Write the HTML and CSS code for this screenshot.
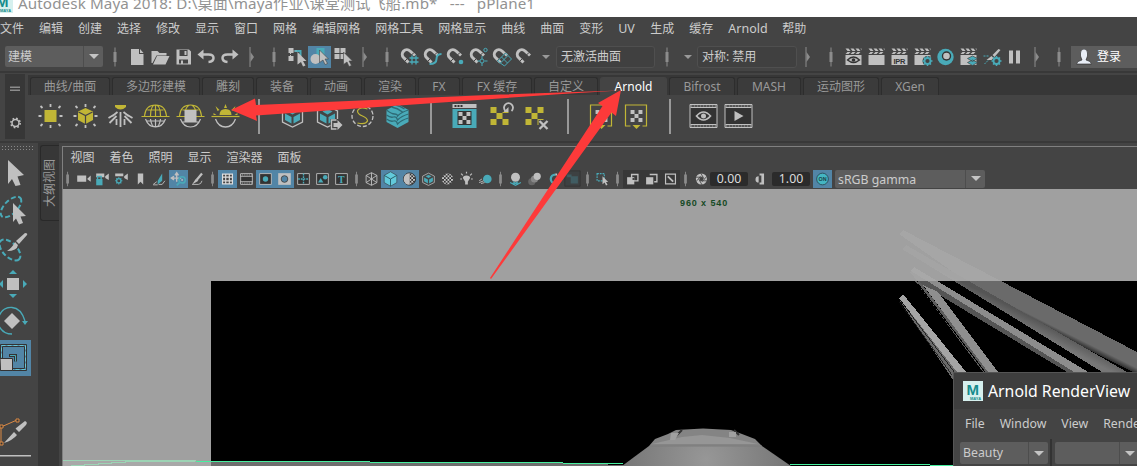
FILE: index.html
```html
<!DOCTYPE html>
<html lang="zh-CN">
<head>
<meta charset="utf-8">
<title>Autodesk Maya 2018</title>
<link rel="stylesheet" href="styles.css">
</head>
<body>
<svg class="defs" aria-hidden="true">
  <defs>
    <pattern id="chk" width="4" height="4" patternUnits="userSpaceOnUse"><path d="M0 0h4v4H0z" fill="#333"/><path d="M0 0h2v2H0zM2 2h2v2H2z" fill="#c8c8c8"/></pattern>
    <g id="sep"><path class="g" d="M-.5-9.500h1v19h-1z"/><path class="g" d="M-1.500-5h3v10h-3z"/></g>
    <g id="endsep"><path class="g" d="M-2.500-10h1v20h-1z"/><path class="g" d="M-1.500-5l3.500 5-3.500 5z"/></g>
    <g id="psep"><path class="g" d="M-.5-8h1v16h-1zM-1.500-5h3v10h-3z"/></g>
    <path id="cur" d="M0 0L9 9H5.500L8 13.500 5.500 14.500 3.500 10 0 12.500z"/>
    <g id="mag"><path class="ls" stroke-width="3" d="M-1 5.500L-6 .500A4.600 4.600 0 0 1 .500-6L5.500-1.500"/><path stroke="#444" stroke-width="1" d="M-5 4.500l3.500-3.500M1-1l3.500-3.500"/></g>
    <g id="clap"><path d="M-8-2H8V8H-8z"/><path d="M-8-8.500h3l2 2.500h-3zM-3-8.500h3l2 2.500h-3zM2-8.500h3l2 2.500h-3zM7-8.500h1v2zM-8-3l2-2h3l-2 2zM-3-3l2-2h3l-2 2zM2-3l2-2h3l-2 2z"/></g>
    <g id="gear"><circle class="ts" r="3" stroke-width="1.800"/><path class="ts" stroke-width="1.500" d="M0-3v-2M0 3v2M-3 0h-2M3 0h2M-2-2l-1.500-1.500M2 2l1.500 1.500M-2 2l-1.500 1.500M2-2l1.500-1.500"/></g>
    <g id="rays"><path class="ls" stroke-width="1.800" d="M0-9v-3M0 9v3M-9 0h-3M9 0h3M-8-8l-2-2M8-8l2-2M-8 8l-2 2M8 8l2 2"/></g>
    <g id="cube"><path class="ls" stroke-width="1.300" d="M0-10L10-5V6L0 11-10 6V-5z"/><path class="t" d="M-7.500-2.500L-1 1V7.500L-7.500 4zM7.500-2.500L1 1V7.500L7.500 4zM0-7l5 2.500L0-1.500l-5-3z"/></g>
    <g id="check"><path d="M-9-9h6v6h-6zM3-9h6v6H3zM-3-3h6v6h-6zM-9 3h6v6h-6zM3 3h6v6H3z"/></g>
    <g id="frame"><path d="M-6.500-6h13v12h-13z" fill="#333" stroke="#c0c0c0"/></g>
    <g id="film"><path d="M-13.500-11.500h27v23h-27z" fill="#333" stroke="#c0c0c0"/><path class="ls" stroke-dasharray="2 1" d="M-13-10h26M-13 10h26"/><path class="ls" d="M-13-8.500h26M-13 8.500h26"/></g>
  </defs>
</svg>

<main class="app">
  <header class="titlebar">
    <svg class="logo" viewBox="0 0 18 18"><rect width="18" height="18" fill="#d6f0ee"/><text class="logo-m" x="1" y="12">M</text><text class="logo-s" x="5" y="17">MAYA</text></svg>
    <span>Autodesk Maya 2018: D:\<b>桌面</b>\maya<b>作业</b>\<b>课堂测试飞船</b>.mb*&nbsp;&nbsp; ---&nbsp;&nbsp; pPlane1</span>
  </header>

  <nav class="menubar">
    <span>文件</span><span>编辑</span><span>创建</span><span>选择</span><span>修改</span><span>显示</span><span>窗口</span><span>网格</span><span>编辑网格</span><span>网格工具</span><span>网格显示</span><span>曲线</span><span>曲面</span><span>变形</span><span class="latin uv">UV</span><span>生成</span><span>缓存</span><span class="latin arn">Arnold</span><span>帮助</span>
  </nav>

  <section class="toolbar">
    <div class="combo mode"><span>建模</span><i class="drop"></i></div>
    <svg class="k s" viewBox="-11 -12 22 24"><use href="#sep"/></svg>
    <svg class="k" viewBox="-11.500 -12 23 24"><path d="M-6.500-8H1.500V-3H6V8H-6.500zM2.500-8L6-4H2.500z"/></svg>
    <svg class="k" viewBox="-11.500 -12 23 24"><path d="M-9-6h6l2 2H6v2.500H-4L-8 6h-1zM-3.500-1H9L5 7.500H-7.500z"/></svg>
    <svg class="k" viewBox="-11.500 -12 23 24"><path fill-rule="evenodd" d="M-7-7.500H5.500L7.500-5.500V7.500H-7zM-4-7v6h8v-6zM-4.500 2.500v4h9v-4zM1-6h2v4H1zM-2.500 3.500h2v3h-2z"/></svg>
    <svg class="k" viewBox="-11.500 -12 23 24"><path d="M-9-2.500l6-5v10z"/><path class="ls" stroke-width="2.500" d="M-4-2.500H2Q7-2.500 7 1T2 5"/></svg>
    <svg class="k" viewBox="-11.500 -12 23 24"><path d="M9-2.500l-6-5v10z"/><path class="ls" stroke-width="2.500" d="M4-2.500H-2Q-7-2.500-7 1T-2 5"/></svg>
    <svg class="k s" viewBox="-11 -12 22 24"><use href="#endsep"/></svg>
    <svg class="k s" viewBox="-11 -12 22 24"><use href="#sep"/></svg>
    <svg class="k" viewBox="-11.500 -12 23 24"><path d="M-8-9h5v5h-5zM-8-1h5v5h-5z"/><path class="ts" stroke-width="2" d="M-2-6h6v5"/><path class="ls" stroke-dasharray="1 1" d="M-6-4v3M-3-6h3"/><use href="#cur" x="1" y="-5"/></svg>
    <svg class="k on" viewBox="-11.500 -11 23 22"><path class="t" d="M-3-9H5V0H-3z"/><circle cx="-4" cy="2" r="5"/><use href="#cur" x="0" y="-7" stroke="#444" stroke-width=".6"/></svg>
    <svg class="k" viewBox="-11.500 -12 23 24"><path d="M-8-9h5v5h-5zM-2-9h5v5h-5zM-8-3h5v5h-5zM-2-3h5v5h-5z"/><use href="#cur" x="1" y="-5" stroke="#444" stroke-width=".6"/></svg>
    <svg class="k s" viewBox="-11 -12 22 24"><use href="#endsep"/></svg>
    <svg class="k s" viewBox="-11 -12 22 24"><use href="#sep"/></svg>
    <svg class="k" viewBox="-11.500 -12 23 24"><use href="#mag"/><path class="ts" stroke-width="1.300" d="M0 1h9M0 5h9M2.500-1.500v9M6.500-1.500v9"/></svg>
    <svg class="k" viewBox="-11.500 -12 23 24"><use href="#mag"/><path class="ts" stroke-width="2" d="M-3 7Q4 7 4 2T9-3"/></svg>
    <svg class="k" viewBox="-11.500 -12 23 24"><use href="#mag"/><circle class="t" cx="5.500" cy="5" r="2.300"/></svg>
    <svg class="k" viewBox="-11.500 -12 23 24"><use href="#mag"/><circle class="ts" cx="3.500" cy="4" r="2"/><circle class="ts" cx="7" cy="-7" r="1.700"/><path class="ts" d="M3.500-1v3M3.500 6v3M-1 4h2.500M6 4h3"/></svg>
    <svg class="k" viewBox="-11.500 -12 23 24"><use href="#mag"/><path class="ts" d="M-4 4L4-4 10 2 3 9zM-1 6L6-1M0 0l6 6"/></svg>
    <svg class="k" viewBox="-11.500 -12 23 24"><use href="#mag"/></svg>
    <i class="caret"></i>
    <div class="field f1">无激活曲面</div>
    <svg class="k s" viewBox="-11 -12 22 24"><use href="#sep"/></svg>
    <i class="caret c2"></i>
    <div class="field f2">对称: 禁用</div>
    <svg class="k s" viewBox="-11 -12 22 24"><use href="#endsep"/></svg>
    <svg class="k s" viewBox="-11 -12 22 24"><use href="#sep"/></svg>
    <svg class="k" viewBox="-11.500 -12 23 24"><use href="#clap"/><path d="M-6 3Q0-3 6 3Q0 8-6 3z" fill="#bbb" stroke="#333" stroke-width="1.300"/><circle cy="3" r="1.800" fill="#333"/></svg>
    <svg class="k" viewBox="-11.500 -12 23 24"><use href="#clap"/></svg>
    <svg class="k" viewBox="-11.500 -12 23 24"><use href="#clap"/><text class="ipr" x="-6" y="6.500" textLength="12">IPR</text></svg>
    <svg class="k" viewBox="-11.500 -12 23 24"><use href="#clap"/><circle cx="5" cy="4" r="5" fill="#444"/><use href="#gear" transform="translate(5 4)"/></svg>
    <svg class="k" viewBox="-11.500 -12 23 24"><circle class="t" r="8.200"/><circle cx="1" cy="-1" r="4.700" fill="#333"/><circle cx="1" cy="-1" r="3.300"/></svg>
    <svg class="k" viewBox="-11.500 -12 23 24"><use href="#clap"/><path class="t" stroke="#444" stroke-width=".7" d="M4 3l5 2.500L4 8.500-1 5.500zM4-1l5 2.500L4 4.500-1 1.500z"/></svg>
    <svg class="k" viewBox="-11.500 -12 23 24"><path d="M7-8L1-2l2 2 6-7zM0-1l2 2-2 2H-5z"/><use href="#gear" transform="translate(5 4)"/><path class="ts" stroke-dasharray="2 1" d="M-8-1h5M-7 7l4-4"/></svg>
    <svg class="k" viewBox="-11.500 -12 23 24"><path d="M-5.500-6.500h4v13h-4zM1.500-6.500h4v13h-4z"/></svg>
    <svg class="k s" viewBox="-11 -12 22 24"><use href="#endsep"/></svg>
    <svg class="k s" viewBox="-11 -12 22 24"><use href="#sep"/></svg>
    <div class="login"><svg viewBox="-8 -8 16 16" width="16" height="16"><path d="M-7.500 7Q-7 4-2 3L-3.500-1V-4Q-3.500-8 0-8T3.500-4V-1L2 3Q7 4 7.500 7z" fill="#e8edf6" stroke="#222" stroke-width=".6"/></svg><span>登录</span></div>
  </section>

  <section class="shelf">
    <div class="shelf-side">
      <svg viewBox="0 0 20 65" width="20" height="65"><path class="g" d="M5 12.500h10v1.500H5zM5 15.500h10V17H5z"/><circle class="ls" cx="10.500" cy="49" r="3.500" stroke-width="1.500"/><circle class="ls" cx="10.500" cy="49" r="4.700" stroke-width="1.500" stroke-dasharray="1.700 2"/></svg>
    </div>
    <div class="shelf-main">
      <div class="tabs">
        <span class="w80">曲线/曲面</span><span class="w88">多边形建模</span><span class="w52">雕刻</span><span class="w52">装备</span><span class="w52">动画</span><span class="w52">渲染</span><span class="w42">FX</span><span class="w70">FX 缓存</span><span class="w64">自定义</span><span class="w67 active">Arnold</span><span class="w66">Bifrost</span><span class="w64">MASH</span><span class="w76">运动图形</span><span class="w58">XGen</span>
      </div>
      <div class="shelf-icons">
        <svg class="h" viewBox="-17.500 -18 35 36"><use href="#rays"/><path class="y" d="M-6-6H6V6H-6z"/></svg>
        <svg class="h" viewBox="-17.500 -18 35 36"><use href="#rays"/><path class="y" d="M0-8L7.500-4.500V4L0 8-7.500 4V-4.500z"/><path d="M-7-4L0-.5 7-4M0 0v8" fill="none" stroke="#444" stroke-width="1.200"/></svg>
        <svg class="h" viewBox="-17.500 -18 35 36"><path class="y" d="M-5.500-11H5.500V-9Q0-4-5.500-9z"/><path class="ls" stroke-width="1.800" d="M0-4v15M-3-4L-8 0M-7-1L-12 2M-4 0L-11 7M3-4L8 0M7-1L12 2M4 0L11 7M-4 3V9M4 3V9"/></svg>
        <svg class="h" viewBox="-17.500 -18 35 36"><path class="ys" d="M-11 0Q-10-11 0-11T11 0M-5 0Q-5-11 0-11T5 0M0-11V0M-8-6H8M-14 0.500H14"/><path class="ls" stroke-width="1.200" d="M-10 3Q-7 11 0 11T10 3M-5 3Q-4 11 0 11T5 3M0 3v8M-9 5H9"/></svg>
        <svg class="h" viewBox="-17.500 -18 35 36"><path class="ys" d="M-11 0Q-10-11 0-11T11 0M-5-6Q-3-11 0-11T5-6M-8-6H8M-14 0.500H14"/><path class="ls" stroke-width="1.200" d="M-10 3Q-7 11 0 11T10 3M-8 6H8"/><path d="M-6-6H6V6H-6z"/></svg>
        <svg class="h" viewBox="-17.500 -18 35 36"><path class="y" d="M-6-1Q-6-7 0-7T6-1zM-1.500-8L0-12 1.500-8zM-6-6l-4-4 2 5zM6-6l4-4-2 5zM-9-1l-3-2v2zM9-1l3-2v2z"/><path class="ys" stroke-width="1.500" d="M-14 .5H14"/><path class="ls" stroke-width="1.300" d="M-10 3Q-7 11 0 11T10 3"/></svg>
        <i class="bar"></i>
        <svg class="h" viewBox="-17.500 -18 35 36"><use href="#cube"/></svg>
        <svg class="h" viewBox="-17.500 -18 35 36"><use href="#cube"/><path d="M3 3h12v12H3z" fill="#444"/><path class="ls" stroke-width="1.300" d="M9 4H4v9h5"/><path d="M6 7h4V4l5 5-5 5v-3H6z"/></svg>
        <svg class="h" viewBox="-17.500 -18 35 36"><circle class="ls" r="10.500" stroke-width="1.300" stroke-dasharray="4 2"/><path class="ys" stroke-width="2" d="M5-7Q-3-10-5-5Q-5-2 0 0T5 5Q3 9-5 7"/></svg>
        <svg class="h" viewBox="-17.500 -18 35 36"><path class="t" d="M0-12L11-6V6L0 12-11 6V-6z"/><path fill="none" stroke="#2e6a75" stroke-width="1.300" d="M-11-6Q-6-2-3-2T0 0Q4-4 11-6M-11-1Q-7 2-4 1T0 4Q4 0 11-2M-11 3Q-7 6-4 5T0 8Q4 4 11 2M-6-9Q0-8 5-4M-2-11Q3-10 7-7"/></svg>
        <i class="bar"></i>
        <svg class="h" viewBox="-17.500 -18 35 36"><path class="t" d="M-12-7h24v19h-24z"/><path d="M-12-12h24v4h-24z"/><path d="M-10-11h2v2h-2zM-7-11h2v2h-2zM-4-11h2v2h-2zM-7-5H7V9H-7z" fill="#333"/><use href="#check" transform="translate(0 2) scale(.66)"/></svg>
        <svg class="h" viewBox="-17.500 -18 35 36"><g class="y"><use href="#check"/></g><path d="M2-14h12v10H2z" fill="#444"/><path class="ls" stroke-width="1.800" d="M6-5A4.500 4.500 0 1 1 12-5"/><path d="M4-4h5l0-5z"/></svg>
        <svg class="h" viewBox="-17.500 -18 35 36"><g class="y"><use href="#check"/></g><path d="M4 4h11v11H4z" fill="#444"/><path class="ls" stroke-width="2.300" d="M5 5l8 8M13 5l-8 8"/></svg>
        <i class="bar"></i>
        <svg class="h" viewBox="-17.500 -18 35 36"><path class="ys" stroke-width="1.500" d="M-6 10h-5v-21h21v21H6"/><path class="y" d="M-4 9h8l-4 4z"/><use href="#check" transform="scale(.66)"/></svg>
        <svg class="h" viewBox="-17.500 -18 35 36"><path class="ys" stroke-width="1.500" d="M-6 10h-5v-21h21v21H6"/><path class="y" d="M-4 9h8l-4 4z"/><use href="#check" transform="scale(.66)"/></svg>
        <i class="bar"></i>
        <svg class="h" viewBox="-17.500 -18 35 36"><use href="#film"/><path class="ls" stroke-width="1.700" d="M-7 0Q0-8 7 0Q0 8-7 0z"/><circle r="2.500"/></svg>
        <svg class="h" viewBox="-17.500 -18 35 36"><use href="#film"/><path d="M-4-5L5 0-4 5z"/></svg>
      </div>
    </div>
  </section>

  <section class="work">
    <aside class="toolbox">
      <svg viewBox="0 143 38 323" width="38" height="323">
        <path d="M2 146.500h32M2 149.500h32" fill="none" stroke="#888" stroke-dasharray="1 2"/>
        <path d="M8 160L24 175 17.500 176.500 20.500 185 15.500 186 12 179 8 184z"/>
        <ellipse class="ts" cx="11" cy="207" rx="13" ry="6.500" transform="rotate(-45 11 207)" stroke-width="2" stroke-dasharray="5 2.500"/>
        <path d="M13 203L26 216 20.500 216.500 23 223 19 224.500 16 218.500 13 222z"/>
        <ellipse class="ts" cx="10" cy="250" rx="13" ry="7" transform="rotate(45 10 250)" stroke-width="2" stroke-dasharray="5 2.500"/>
        <path d="M25 233q3 0 2 2l-8 9-3-3zM15 242l3 3q-1 6-11 6 5-3 8-9z"/>
        <path d="M7 278h12v12H7z"/><path class="t" d="M9 274l4-4 4 4zM9 294h8l-4 4zM3 280v8l-4-4zM23 280v8l4-4z"/>
        <path d="M12 313l8 8-8 8-8-8z"/><path class="ts" stroke-width="1.300" d="M-1 316Q3 307 12 307.500T25 321M12 334Q3 334-1 326"/><path class="t" d="M22 321h6l-3 4z"/>
        <path d="M0 340h31v36H0z" fill="#5285a6"/><path d="M.5 344.500h26v26h-26z" fill="none" stroke="#333"/><path d="M1.500 345.500h24v24h-24z" fill="none" stroke="#66c6d5" stroke-dasharray="4 2"/><path d="M2.500 346.500h22v22h-22z" fill="none" stroke="#333"/><path d="M9 355.500h6.500v6" fill="none" stroke="#333" stroke-width="3"/><path class="ts" d="M10 355.500h5.500v6"/><path d="M0 358.500h12.500v12H.5z" stroke="#333"/>
        <path d="M1 427L17 420M1 427v16" stroke="#dc8a45" fill="none"/><path d="M16 419h3v3h-3zM0 425h3v3H0zM0 442h3v3H0z" fill="#333" stroke="#dc8a45"/><path d="M25 421q3 1 1 4l-7 7-3.500-3.500zM14 432l3 3q-4 5-13 8z"/>
        <path d="M0 455h31v1.500H0z"/>
      </svg>
    </aside>
    <aside class="outliner"><div>大纲视图</div></aside>
    <section class="panel">
      <nav class="panel-menu"><span>视图</span><span>着色</span><span>照明</span><span>显示</span><span>渲染器</span><span>面板</span></nav>
      <div class="panel-tools">
        <svg class="q" viewBox="-4.500 -10 11 20"><use href="#psep"/></svg>
        <svg class="p" viewBox="-9.500 -10 19 20"><path d="M-7-4H3v7H-7zM4 0l4-4v7z"/></svg>
        <svg class="p" viewBox="-9.500 -10 19 20"><path d="M-7-6h9v4h-9zM3-3l4-3v7L3-1z"/><path class="t" d="M-7 0H0V7H-7z"/><path class="ts" stroke-width="1.500" d="M-5.500 0v-3h4v3"/></svg>
        <svg class="p" viewBox="-9.500 -10 19 20"><path d="M-7-6H2v3h-9zM3-3l4-3v7L3-1z"/><use href="#gear" transform="translate(-3 2) scale(.8)"/></svg>
        <svg class="p" viewBox="-9.500 -10 19 20"><path d="M-3-6H3V6L0 3-3 6z"/></svg>
        <svg class="p" viewBox="-9.500 -10 19 20"><path class="t" d="M-2 2L3-6V2L-2 6z"/><path class="ls" d="M-1 6H3L6 2M-7 6l4-3M-7 6.500h5"/></svg>
        <svg class="p on" viewBox="-9.500 -10 19 20"><path class="ls" stroke-width="1.500" d="M-7-1H3M-2-6V3M-4-4l2-3 2 3M-5-3l-3 2 3 2"/><circle class="ts" cx="4" cy="1" r="3.500" stroke-width="1.700"/><circle cx="4" cy="1" r="1"/><path class="ts" stroke-width="2" d="M1 4l-3 3"/></svg>
        <svg class="p" viewBox="-9.500 -10 19 20"><path class="ls" stroke-width="2.500" d="M5-6L-1 1"/><path d="M-2 0l3 2-7 4z"/><path class="ls" d="M-6 6H1Q4 6 5 2"/></svg>
        <svg class="q" viewBox="-5.500 -10 11 20"><use href="#psep"/></svg>
        <svg class="p on" viewBox="-9.500 -10 19 20"><path fill="#444" stroke="#ddd" stroke-width="1.300" d="M-5.500-5.500h11v11h-11zM-2-5v10M2-5v10M-5-2H5M-5 2H5"/></svg>
        <svg class="p" viewBox="-9.500 -10 19 20"><use href="#frame"/><path class="ls" stroke-dasharray="1 1" d="M-7-4.500H7M-7 4.500H7"/><path class="ls" d="M-7-3H7M-7 3H7"/></svg>
        <svg class="p on" viewBox="-9.500 -10 19 20"><use href="#frame"/><circle class="t" r="3"/></svg>
        <svg class="p on" viewBox="-9.500 -10 19 20"><path d="M-7-6.500H7v13H-7z"/><circle r="3.700" fill="#5285a6" stroke="#444"/></svg>
        <svg class="p" viewBox="-9.500 -10 19 20"><use href="#frame"/><path class="ts" stroke-width="1.500" stroke-dasharray="2 1" d="M-6 0H6M0-6V6"/></svg>
        <svg class="p" viewBox="-9.500 -10 19 20"><use href="#frame"/><circle class="t" cx="3" cy="-2" r="2.500"/><path class="t" d="M-5 4l3-5 3 5z"/></svg>
        <svg class="p" viewBox="-9.500 -10 19 20"><use href="#frame"/><text class="tt" x="-4" y="4">T</text></svg>
        <svg class="q" viewBox="-5.500 -10 11 20"><use href="#psep"/></svg>
        <svg class="p" viewBox="-9.500 -10 19 20"><path class="ls" d="M0-7L6-4V4L0 7-6 4V-4zM-6-4L0 0 6-4M0-7V7M-6 4L0 0 6 4"/></svg>
        <svg class="p on" viewBox="-9.500 -10 19 20"><path fill="#62cadb" stroke="#333" stroke-width=".6" d="M0-8L7-4V4L0 8-7 4V-4z"/><path d="M-7-4L0 0 7-4M0 0V8" fill="none" stroke="#25555f"/></svg>
        <svg class="p on" viewBox="-9.500 -10 19 20"><circle r="6.800" fill="url(#chk)" stroke="#333"/><path d="M0-6.500A6.500 6.500 0 0 0 0 6.500z"/></svg>
        <svg class="p" viewBox="-9.500 -10 19 20"><use href="#cube" transform="scale(.65)"/></svg>
        <svg class="p" viewBox="-9.500 -10 19 20"><circle r="6.300" fill="url(#chk)"/></svg>
        <svg class="p" viewBox="-9.500 -10 19 20"><path d="M0-4Q4-4 4-1L1.500 3v3h-3V3L-4-1Q-4-4 0-4z"/><path class="ls" stroke-width="1.300" d="M0-8v2M-7 0h2M5 0h2M-6-6l2 2M6-6L4-4"/></svg>
        <svg class="p" viewBox="-9.500 -10 19 20"><circle class="t" cx="2" cy="0" r="4.800"/><path class="ls" d="M-7 2l3-2M-7 4l5-2M-5 5l4-1"/></svg>
        <svg class="q" viewBox="-5.500 -10 11 20"><use href="#psep"/></svg>
        <svg class="p" viewBox="-9.500 -10 19 20"><circle cy="-2" r="5"/><path class="ts" stroke-width="1.300" d="M-6 4l6 3 6-3M-3 3l6 3M3 3l-6 3"/></svg>
        <svg class="p" viewBox="-9.500 -10 19 20"><circle cx="-3" cy="3" r="4" fill="#666"/><circle cx="0" cy="0" r="4" fill="#888"/><circle cx="3" cy="-3" r="4"/></svg>
        <svg class="p" viewBox="-9.500 -10 19 20"><path class="ts" stroke-width="2.500" d="M2-5A5 5 0 1 0 2 5"/><path d="M2-6h2v2H2zM4-4h2v2H4z"/></svg>
        <svg class="p" viewBox="-9.500 -10 19 20"><path fill="#3d4142" stroke="#343434" d="M-8.500-9h17v17h-17z"/><path fill="#405c62" d="M-2-3h8v8h-8zM-6-5h5v3h-5z"/></svg>
        <svg class="q" viewBox="-5.500 -10 11 20"><use href="#psep"/></svg>
        <svg class="p" viewBox="-9.500 -10 19 20"><path class="ts" stroke-width="1.300" stroke-dasharray="2 1" d="M-6-6h8v8h-8z"/><use href="#cur" transform="translate(0 -3) scale(.7)"/></svg>
        <svg class="q" viewBox="-5.500 -10 11 20"><use href="#psep"/></svg>
        <svg class="p dark" viewBox="-9.500 -10 19 20"><path d="M-6-2h8v8h-8z"/><path class="ls" stroke-width="1.500" d="M-1-5h7v7h-7z"/><path fill="#333" d="M0-1h2v2H0z"/></svg>
        <svg class="p dark" viewBox="-9.500 -10 19 20"><path class="ls" stroke-width="1.500" d="M-2-5h8v8H3"/><path d="M-6-2h8v8h-8z"/></svg>
        <svg class="p dark" viewBox="-9.500 -10 19 20"><path class="ls" stroke-width="1.300" d="M-5.500-5.500h11v11h-11z"/><path class="ls" stroke-width="2" d="M-3-3l6 6"/></svg>
        <svg class="q" viewBox="-5.500 -10 11 20"><use href="#psep"/></svg>
        <svg class="p" viewBox="-10.500 -10 19 20"><circle class="ls" r="4.200" stroke-width="4"/><path stroke="#444" stroke-width=".9" fill="none" d="M-6-2L2-2M-1-7L3 0M6-3L1 3M6 2H-2M1 7L-3 0M-6 3L-1-3"/></svg>
        <span class="num">0.00</span>
        <svg class="m" viewBox="-11.500 -10 24 20"><path d="M-1-3A3.500 3.500 0 0 0-1 4zM0-6H5V6H0V4H2V-4H0z"/></svg>
        <span class="num">1.00</span>
        <svg class="p on onoff" viewBox="-9.500 -10 19 20"><circle r="6.500" fill="#44b5c2" stroke="#294c58"/><text class="ontext" x="-4.500" y="2" textLength="9">ON</text></svg>
        <div class="combo gamma"><span>sRGB gamma</span><i class="drop"></i></div>
      </div>
      <div class="viewport">
        <svg viewBox="63 189 1074 277" width="1074" height="277">
          <defs>
            <linearGradient id="bA" gradientUnits="userSpaceOnUse" x1="1060" y1="310" x2="1048" y2="334"><stop offset=".65" stop-color="#6a6a6a"/><stop offset="1" stop-color="#000"/></linearGradient>
            <linearGradient id="bB" gradientUnits="userSpaceOnUse" x1="1050" y1="326" x2="1040" y2="346"><stop offset="0" stop-color="#555"/><stop offset=".6" stop-color="#777"/></linearGradient>
            <radialGradient id="dome" gradientUnits="userSpaceOnUse" cx="706" cy="460" r="82"><stop offset="0" stop-color="#979797"/><stop offset="1" stop-color="#777"/></radialGradient>
          </defs>
          <path d="M63 189h1074v277H63z" fill="#000"/>
          <g shape-rendering="crispEdges">
            <path fill="url(#bA)" d="M903 230L1137 352V374L1000 305 899 234z"/>
            <path fill="url(#bB)" d="M906 245L1127 372H1102L902 249z"/>
            <path fill="#555" d="M910 272L918 282 1067 372H1080L914 268z"/>
            <path fill="#8c8c8c" d="M914 267L1088 372H1074L911 271z"/>
            <path fill="#5d5d5d" d="M915 281L983 372H989L921 283z"/>
            <path fill="#8f8f8f" d="M923 285L938 292 998 372H988z"/>
            <path d="M918 284l67 88" stroke="#000"/>
            <path fill="#6a6a6a" d="M898 298L953 380 960 372z"/>
            <path fill="#a5a5a5" d="M903 294L966 372H957L899 298z"/>
            <path d="M900 300l55 73M899 302l53 73" stroke="#111" stroke-width=".8"/>
            <path fill="#6e6e6e" d="M211 462l350 1 63 2v1H211z"/>
          </g>
          <path fill="#a9a9a9" opacity=".945" d="M63 189h1074v92H211v185H63z"/>
          <path fill="#a8a8a8" d="M63 461h148v5H63z"/>
          <g fill="none" shape-rendering="crispEdges"><path stroke="#9cd3b4" d="M63 460.500h133M71 465.500h13v-1h14v-1h13v-1h14v-1h70"/><path stroke="#46f0a0" d="M196 461.500h174M370 462.500h193M563 463.500h60M790 464.500h140M930 465.500h23"/></g>
          <path fill="url(#dome)" d="M622 466L649 446 762 446 791 466z"/>
          <path fill="#848484" d="M649 446L655 439 668 434 676 430 703 428.500 731 430 742 434 755 439 762 446z"/>
          <path fill="#969696" d="M652 444L682 437 702 435 730 438 758 444z"/>
          <path d="M650 446h112" stroke="#7c7c7c"/><path d="M675 437l7-7M734 430l5 5" stroke="#333" stroke-width="2"/><path d="M671 433h8l-4 7h-5zM729 432h7v5h-7z" fill="#a0a0a0"/>
        </svg>
        <span class="res">960 x 540</span>
      </div>
    </section>
  </section>

  <section class="render-view">
    <header><svg viewBox="0 0 20 20" width="20" height="20"><rect width="20" height="20" fill="#d6f0ee"/><text class="logo-m" x="3.500" y="14">M</text><text class="logo-s" x="7" y="18.500">MAYA</text></svg><span>Arnold RenderView</span></header>
    <nav><span>File</span><span>Window</span><span>View</span><span>Render</span></nav>
    <div class="rv-row"><div class="combo rv"><span>Beauty</span><i class="drop"></i></div><i class="rv-div"></i><div class="combo rv rv2"><span></span><i class="drop"></i></div></div>
  </section>

  <svg class="notes" viewBox="0 0 1137 466"><path fill="#fd3a3a" d="M231 110L255 98.500 256 105 500 94.500 620 90.500 570 93.500 256 115.500 257 121zM490 278L602.500 106 598 103 621 90 616 116 611.500 112.500 491 279z"/></svg>
</main>
</body>
</html>
```
FILE: styles.css
```css
* { box-sizing: border-box; }
body { margin: 0; background: #444; overflow: hidden; font: 12px/16px "Noto Sans", "Noto Sans CJK SC", sans-serif; color: #ccc; }
i, b { font-style: normal; font-weight: 400; }
svg { display: block; flex: none; fill: #c0c0c0; }
.defs { position: absolute; width: 0; height: 0; }
.app { position: relative; width: 1137px; height: 466px; overflow: hidden; display: flex; flex-direction: column; }
.g { fill: #8c8c8c; }
.t { fill: #49aab8; }
.y { fill: #c1b636; }
.ts { fill: none; stroke: #49aab8; }
.ls { fill: none; stroke: #c0c0c0; }
.ys { fill: none; stroke: #c1b636; stroke-width: 1.2; }

.titlebar { flex: none; height: 17px; background: #fff; color: #929292; display: flex; align-items: flex-end; overflow: hidden; white-space: pre; font-size: 15.2px; line-height: 22px; }
.titlebar span { margin-left: 5px; margin-bottom: 3px; letter-spacing: .1px; }
.logo { width: 18px; height: 18px; margin-left: -5px; margin-bottom: 4px; }
.logo-m { font: 900 15px "Liberation Sans", sans-serif; fill: #168b8c; }
.logo-s { font: 700 4px "Liberation Sans", sans-serif; fill: #168b8c; }

.menubar { flex: none; height: 24px; display: flex; gap: 15px; align-items: center; white-space: nowrap; }
.latin { font-size: 12.5px; }
.uv { width: 17px; }
.arn { width: 39px; }

.toolbar { flex: none; height: 32px; padding: 1px 0 0 5px; display: flex; align-items: center; border-bottom: 2px solid #383838; white-space: nowrap; }
.combo { flex: none; display: flex; background: #5d5d5d; border-radius: 2px; height: 21px; line-height: 21px; }
.combo span { flex: 1; padding-left: 3px; overflow: hidden; }
.drop { width: 20px; border-left: 1px solid #4d4d4d; display: flex; align-items: center; justify-content: center; }
.drop::before, .caret::before { content: ""; border: 5px solid transparent; border-top-color: #c4c4c4; border-bottom: 0; }
.mode { width: 98px; margin-right: 1px; }
.k { width: 23px; height: 24px; }
.k, .h, .p { overflow: visible; }
.k.s { width: 22px; }
.on { background: #5285a6; }
.k.on { height: 22px; }
.caret { width: 20px; display: flex; justify-content: center; }
.caret::before { border-width: 4px 4px 0; border-top-color: #999; }
.c2 { width: 19px; }
.field { height: 22px; border: 1px solid #4f4f4f; border-radius: 3px; background: #404040; line-height: 20px; padding-left: 4px; }
.f1 { width: 99px; margin-right: 1px; }
.f2 { width: 100px; }
.f2 + .k { margin-right: 1px; }
.ipr { font: 700 7.5px "Liberation Sans", sans-serif; fill: #333; }
.login { flex: 1; height: 22px; margin-left: 1px; padding-left: 5px; background: #5d5d5d; color: #fff; display: flex; align-items: center; gap: 5px; }

.shelf { flex: none; height: 70px; padding-left: 5px; display: flex; border-bottom: 2px solid #393939; }
.shelf-side { width: 20px; height: 65px; margin-top: 1px; background: #373737; }
.shelf-main { flex: 1; margin-left: 3px; }
.tabs { height: 20px; margin-top: 2px; padding: 2px 0 0 2px; display: flex; gap: 2px; background: #373737; color: #999; }
.tabs span { flex: none; border: 1px solid #2d2d2d; border-bottom: 0; border-radius: 3px 3px 0 0; background: #3b3b3b; text-align: center; line-height: 17px; }
.tabs .active { background: #444; border-color: #444; color: #fff; }
.w80 { width: 80px; }
.w88 { width: 88px; }
.w52 { width: 52px; }
.w42 { width: 42px; }
.w70 { width: 70px; }
.w64 { width: 64px; }
.w67 { width: 67px; }
.w66 { width: 66px; }
.w76 { width: 76px; }
.w58 { width: 58px; }
.shelf-icons { height: 42px; padding-left: 5px; display: flex; align-items: center; }
.h { width: 35px; height: 36px; }
.bar { width: 2px; height: 35px; margin: 1px 15px 0; background: #999; }

.work { flex: 1; display: flex; min-height: 0; }
.toolbox { flex: none; width: 38px; }
.outliner { flex: none; width: 21px; background: #373737; padding: 2px 0 0 2px; }
.outliner div { width: 19px; height: 76px; border: 1px solid #292929; border-left: 0; border-radius: 0 3px 3px 0; writing-mode: vertical-rl; text-orientation: sideways; transform: rotate(180deg); text-align: center; line-height: 17px; color: #999; }
.panel { flex: none; width: 1075px; margin: 3px 0 0 3px; border: solid #808080; border-width: 1px 0 0 1px; }
.panel-menu { height: 21px; padding-left: 7.5px; display: flex; gap: 15px; align-items: center; }
.panel-tools { height: 21px; display: flex; align-items: center; }
.p { width: 19px; height: 18px; }
.q { width: 11px; height: 18px; }
.m { width: 24px; height: 18px; }
.dark { background: #383838; }
.tt { font: 700 11px "Liberation Serif", serif; fill: #49aab8; }
.num { width: 38px; height: 14px; background: #2b2b2b; border-radius: 2px; line-height: 14px; text-align: center; font-size: 12.3px; color: #ddd; }
.onoff { margin: 0 3px; }
.ontext { font: 700 6px "Liberation Sans", sans-serif; fill: #1b4146; }
.gamma { width: 150px; height: 18px; line-height: 19px; font-size: 12.3px; }
.viewport { position: relative; height: 277px; }
.res { position: absolute; left: 617px; top: 8px; font: 700 9px/12px "Liberation Sans", sans-serif; letter-spacing: .9px; color: #164a25; white-space: nowrap; }

.render-view { position: absolute; left: 953px; top: 372px; width: 220px; height: 110px; background: #444; border: 1px solid #555; white-space: nowrap; }
.render-view header { height: 36px; padding-left: 9px; display: flex; align-items: center; gap: 5px; background: #3e3e3e; color: #fff; font-size: 15.8px; }
.render-view nav { height: 30px; padding-left: 11px; display: flex; align-items: center; gap: 15px; font-size: 12.3px; }
.rv-row { display: flex; height: 27px; padding: 3px 0 0 6px; }
.rv { width: 88px; height: 22px; line-height: 22px; font-size: 12.3px; }
.rv2 { width: 84px; }
.rv-div { width: 2px; height: 27px; margin: -3px 3px 0 2px; background: #333; }
.notes { position: absolute; left: 0; top: 0; width: 1137px; height: 466px; pointer-events: none; }
```
